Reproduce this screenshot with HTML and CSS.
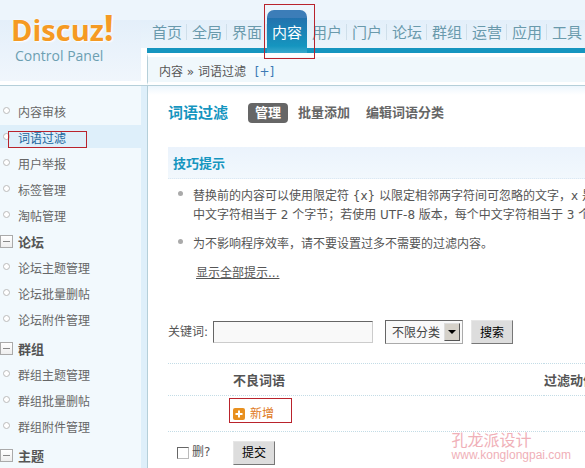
FILE: index.html
```html
<!DOCTYPE html>
<html lang="zh-CN">
<head>
    <meta charset="UTF-8">
    <meta name="viewport" content="width=device-width, initial-scale=1.0">
    <title>Discuz! Control Panel</title>
    <link rel="stylesheet" href="styles.css">
</head>
<body>
    <header class="header">
        <div class="logo">
            <div class="logo-name">Discuz<span class="logo-mark">!</span></div>
            <div class="logo-sub">Control Panel</div>
        </div>
        <div class="top">
            <nav class="nav">
                <a href="#">首页</a>
                <a href="#">全局</a>
                <a href="#">界面</a>
                <a href="#" class="current">内容</a>
                <a href="#">用户</a>
                <a href="#">门户</a>
                <a href="#">论坛</a>
                <a href="#">群组</a>
                <a href="#">运营</a>
                <a href="#">应用</a>
                <a href="#">工具</a>
            </nav>
            <div class="crumbs">内容 » 词语过滤 <a href="#">[+]</a></div>
        </div>
    </header>

    <div class="page">
        <aside class="sidebar">
            <ul class="menu menu-first">
                <li><a href="#">内容审核</a></li>
                <li class="active"><a href="#">词语过滤</a></li>
                <li><a href="#">用户举报</a></li>
                <li><a href="#">标签管理</a></li>
                <li><a href="#">淘帖管理</a></li>
            </ul>
            <h2 class="menu-title">论坛</h2>
            <ul class="menu">
                <li><a href="#">论坛主题管理</a></li>
                <li><a href="#">论坛批量删帖</a></li>
                <li><a href="#">论坛附件管理</a></li>
            </ul>
            <h2 class="menu-title">群组</h2>
            <ul class="menu">
                <li><a href="#">群组主题管理</a></li>
                <li><a href="#">群组批量删帖</a></li>
                <li><a href="#">群组附件管理</a></li>
            </ul>
            <h2 class="menu-title">主题</h2>
        </aside>

        <main class="main">
            <div class="title-row">
                <h1>词语过滤</h1>
                <a href="#" class="tab tab-on">管理</a>
                <a href="#" class="tab">批量添加</a>
                <a href="#" class="tab">编辑词语分类</a>
            </div>

            <section class="tips">
                <h3>技巧提示</h3>
                <ul>
                    <li>替换前的内容可以使用限定符 {x} 以限定相邻两字符间可忽略的文字，x 是<br>中文字符相当于 2 个字节；若使用 UTF-8 版本，每个中文字符相当于 3 个</li>
                    <li>为不影响程序效率，请不要设置过多不需要的过滤内容。</li>
                </ul>
                <a href="#" class="show-all">显示全部提示...</a>
            </section>

            <form class="search">
                <label for="keyword">关键词:</label>
                <input type="text" id="keyword" class="text-input">
                <span class="select-box">
                    <select id="category" aria-label="分类">
                        <option>不限分类</option>
                    </select>
                </span>
                <button type="button" class="btn">搜索</button>
            </form>

            <table class="words">
                <colgroup>
                    <col class="col-check">
                    <col class="col-word">
                    <col>
                </colgroup>
                <thead>
                    <tr>
                        <th></th>
                        <th>不良词语</th>
                        <th>过滤动作</th>
                    </tr>
                </thead>
                <tbody>
                    <tr class="add-row">
                        <td></td>
                        <td colspan="2">
                            <a href="#" class="add">
                                <svg width="12" height="12" viewBox="0 0 12 12">
                                    <rect width="12" height="12" rx="2" fill="#e8901f"/>
                                    <path d="M6 2.5v7M2.5 6h7" stroke="#fff" stroke-width="2"/>
                                </svg>
                                新增
                            </a>
                        </td>
                    </tr>
                    <tr class="submit-row">
                        <td><label class="del"><input type="checkbox">删?</label></td>
                        <td colspan="2"><button type="button" class="btn">提交</button></td>
                    </tr>
                </tbody>
            </table>
        </main>
    </div>

    <div class="watermark">
        <div class="watermark-name">孔龙派设计</div>
        <div>www.konglongpai.com</div>
    </div>
</body>
</html>
```

FILE: styles.css
```css
:root {
    --blue: #1595bf;
    --line: #b5cfd9;
    --pale: #f2f9fd;
    --stripe: #deeffa;
    --text: #555;
    --mark: #b9232c;
}

*, *::before, *::after {
    margin: 0;
    padding: 0;
    box-sizing: border-box;
}

body {
    display: flex;
    flex-direction: column;
    height: 100vh;
    overflow: hidden;
    position: relative;
    background: #fff;
    color: var(--text);
    font: 12px/19px "DejaVu Sans", "Noto Sans CJK SC", sans-serif;
    white-space: nowrap;
}

a {
    color: inherit;
    text-decoration: none;
}

ul {
    list-style: none;
}

button, input, select {
    font: inherit;
}

/* header */
.header {
    display: flex;
    flex: none;
    border-bottom: 1px solid var(--line);
    background: linear-gradient(#edf5fc 20px, #e3effa 20px, #ebf4fb 48px, #fff 48px);
}

.logo {
    width: 141px;
    flex: none;
    padding: 12px 0 0 11px;
    border-bottom: 4px solid #fff;
    background: linear-gradient(#edf5fc 20px, #e4effa 20px, #f0f6fc);
    font-family: "Open Sans", sans-serif;
}

.logo-name {
    height: 35px;
    line-height: 36px;
    font-size: 29px;
    font-weight: bold;
    color: #f59a23;
    text-shadow: 0 0 2px #fff, 1px 1px 2px #fff;
}

.logo-mark {
    font-size: 35px;
    line-height: 30px;
}

.logo-sub {
    padding-left: 4px;
    font-size: 14px;
    line-height: 18px;
    color: #6c9fb2;
}

.top {
    flex: 1;
    min-width: 0;
    margin-left: 6px;
}

.nav {
    display: flex;
    height: 53px;
    padding-top: 10px;
    border-bottom: 5px solid var(--blue);
}

.nav a {
    flex: none;
    width: 40px;
    height: 38px;
    line-height: 46px;
    text-align: center;
    font-size: 15px;
    color: #6a9aac;
    background: linear-gradient(#cfdfea, #cfdfea) right 14px / 1px 16px no-repeat;
}

.nav a:last-child {
    background: none;
}

.nav .current {
    position: relative;
    height: 43px;
    border-radius: 7px 7px 0 0;
    color: #fff;
    background: linear-gradient(#3c7db8 8px, #2272ae 8px, #1595bf 36px, #3aa9cd);
}

.nav .current::after {
    content: "";
    position: absolute;
    inset: -6px -8px -6px -3px;
    border: 1px solid var(--mark);
}

.crumbs {
    height: 32px;
    padding-left: 11px;
    border: solid #fff;
    border-width: 4px 0 3px;
    border-left: 1px solid var(--line);
    line-height: 30px;
    background: #f0f8fc;
}

.crumbs a {
    margin-left: 5px;
    color: #3d79b5;
}

/* sidebar */
.page {
    display: flex;
    flex: 1;
    min-height: 0;
}

.sidebar {
    width: 148px;
    flex: none;
    padding-top: 13px;
    border-right: 1px solid var(--line);
    background: linear-gradient(to right, var(--pale) 141px, var(--stripe) 141px);
}

.menu {
    margin-bottom: 3px;
}

.menu-first {
    margin-bottom: 0;
}

.menu li {
    display: flex;
    align-items: center;
    height: 26px;
    padding-top: 2px;
    color: #666;
}

.menu li::before {
    content: "";
    flex: none;
    width: 7px;
    height: 7px;
    margin: 0 8px 5px 3px;
    border: 1px solid #bbb;
    border-radius: 50%;
    background: #fff;
}

.menu .active {
    position: relative;
    color: #21669c;
    background: linear-gradient(var(--stripe), var(--stripe)) 0 0 / 100% 23px no-repeat;
}

.menu .active::after {
    content: "";
    position: absolute;
    inset: 6px 60px 3px 8px;
    border: 1px solid var(--mark);
}

.menu-title {
    display: flex;
    align-items: center;
    height: 26px;
    font-size: 13px;
}

.menu-title::before {
    content: "";
    flex: none;
    width: 13px;
    height: 13px;
    margin: 0 5px 2px 0;
    border: 1px solid #aaa;
    background: linear-gradient(#888, #888) center / 7px 1px no-repeat, linear-gradient(#fff, #eee);
}

/* content */
.main {
    flex: 1;
    min-width: 0;
    padding: 17px 0 0 20px;
    background: linear-gradient(#edf6fd, #fff 9px);
}

.title-row {
    display: flex;
    height: 20px;
    line-height: 20px;
    font-size: 13px;
    font-weight: bold;
}

h1 {
    margin-right: 20px;
    font-size: 15px;
    color: var(--blue);
}

.tab {
    margin-right: 16px;
    color: #666;
}

.tab-on {
    margin-right: 10px;
    padding: 0 7px;
    border-radius: 4px;
    color: #fff;
    background: #666;
}

.tips {
    margin-top: 24px;
}

.tips h3 {
    height: 32px;
    padding-left: 5px;
    border-bottom: 1px dotted #dce9f2;
    line-height: 34px;
    font-size: 13px;
    color: var(--blue);
    background: linear-gradient(#ebf3fc, #f2f8fd);
}

.tips ul {
    padding-top: 8px;
}

.tips li {
    display: flex;
    margin-bottom: 10px;
}

.tips li::before {
    content: "";
    flex: none;
    width: 5px;
    height: 5px;
    margin: 4px 10px 0;
    border-radius: 50%;
    background: #aaa;
}

.show-all {
    display: block;
    padding-left: 28px;
    text-decoration: underline;
}

.search {
    display: flex;
    align-items: center;
    margin-top: 37px;
}

.text-input {
    width: 160px;
    height: 22px;
    margin: 0 12px 0 5px;
    padding: 0 4px;
    border: 1px solid;
    border-color: #666 #ccc #ccc #666;
    background: #f9f9f9;
}

.select-box {
    position: relative;
    margin-right: 8px;
}

.select-box select {
    display: block;
    width: 78px;
    height: 24px;
    padding: 2px 0 0 6px;
    border: 1px solid;
    border-color: #666 #aaa #aaa #666;
    appearance: none;
    color: #444;
    background: #f9f9f9;
}

/* drop-down arrow button, drawn over the select */
.select-box::before {
    content: "";
    position: absolute;
    top: 3px;
    right: 3px;
    width: 16px;
    height: 18px;
    border: 1px solid;
    border-color: #ddd #555 #555 #ddd;
    background: #d5d1c9;
    pointer-events: none;
}

.select-box::after {
    content: "";
    position: absolute;
    top: 10px;
    right: 7px;
    border: 4px solid transparent;
    border-top-color: #000;
    border-bottom: 0;
    pointer-events: none;
}

.btn {
    width: 42px;
    height: 24px;
    padding-top: 2px;
    border: 1px solid;
    border-color: #e6e6e6 #777 #777 #e6e6e6;
    color: #000;
    background: #ddd;
}

.words {
    width: 100%;
    margin-top: 19px;
    table-layout: fixed;
    border-collapse: collapse;
    text-align: left;
}

.col-check {
    width: 65px;
}

.col-word {
    width: 311px;
}

.words tr {
    height: 32px;
    border-top: 1px dotted #c3dce6;
}

.words th {
    padding-top: 2px;
    font-size: 13px;
}

.words .add-row {
    height: 36px;
}

.words .add-row td {
    padding-top: 4px;
}

.words .submit-row {
    height: 42px;
}

.add {
    position: relative;
    display: inline-flex;
    align-items: center;
    gap: 5px;
    color: #e07a1c;
}

.add::after {
    content: "";
    position: absolute;
    inset: -7px -18px 1px -4px;
    border: 1px solid var(--mark);
}

.del {
    display: flex;
    align-items: center;
    gap: 3px;
    padding-left: 9px;
}

.del input {
    width: 12px;
    height: 12px;
    border: 1px solid;
    border-color: #666 #bbb #bbb #666;
    appearance: none;
    background: #fff;
}

.watermark {
    position: absolute;
    right: 14px;
    bottom: 5px;
    color: #f0b0b8;
    font: 12px/15px "Liberation Sans", "Noto Sans CJK SC", sans-serif;
}

.watermark-name {
    font-size: 16px;
}
```
